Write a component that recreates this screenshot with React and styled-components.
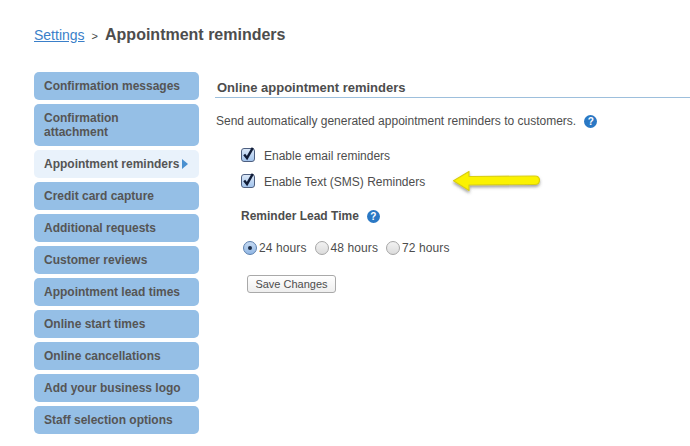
import styled, { createGlobalStyle } from "styled-components";

const GlobalStyle = createGlobalStyle`
  html, body {
    margin: 0;
    background: #fff;
    font-family: "Liberation Sans", Arial, sans-serif;
    color: #555;
  }
`;

const Page = styled.div`
  width: 690px;
  height: 446px;
  overflow: hidden;
  padding: 26px 0 0 34px;
  box-sizing: border-box;
`;

const Breadcrumb = styled.div`
  display: flex;
  align-items: baseline;
  height: 46px;
`;

const BackLink = styled.a`
  font-size: 14px;
  color: #3a7fc9;
  text-decoration: underline;
`;

const Separator = styled.span`
  font-size: 11px;
  margin: 0 7px;
  color: #444;
`;

const Title = styled.h1`
  margin: 0;
  font-size: 16px;
  font-weight: bold;
  color: #4d4d4d;
`;

const Layout = styled.div`
  display: flex;
`;

const Sidebar = styled.nav`
  width: 165px;
  display: flex;
  flex-direction: column;
  gap: 4px;
`;

const NavItem = styled.div`
  display: flex;
  align-items: center;
  box-sizing: border-box;
  min-height: 28px;
  padding: 7px 4px 7px 10px;
  border-radius: 5px;
  font-size: 12px;
  line-height: 14px;
  font-weight: bold;
  color: #555;
  background: ${(p) => (p.$active ? "#e9f2fb" : "#95bfe6")};
`;

const NavLabel = styled.span`
  max-width: 140px;
`;

const ActiveMarker = styled.span`
  width: 0;
  height: 0;
  margin-left: 3px;
  border-left: 6px solid #4a90d0;
  border-top: 5px solid transparent;
  border-bottom: 5px solid transparent;
`;

const Content = styled.main`
  position: relative;
  flex: 1;
  margin-left: 16px;
`;

const SectionTitle = styled.h2`
  margin: 0;
  padding: 9px 0 2px 2px;
  font-size: 13px;
  line-height: 14px;
  font-weight: bold;
  color: #4d4d4d;
  border-bottom: 1px solid #9dbfdc;
`;

const Intro = styled.p`
  display: flex;
  align-items: center;
  margin: 15px 0 0 1px;
  font-size: 12px;
  line-height: 16px;
  color: #4d4d4d;
`;

const HelpBadge = styled.span`
  display: inline-flex;
  align-items: center;
  justify-content: center;
  width: 13px;
  height: 13px;
  margin-left: ${(p) => p.$gap}px;
  border-radius: 50%;
  background: #2a78c4;
  color: #fff;
  font-size: 10px;
  line-height: 13px;
  font-weight: bold;
`;

const CheckList = styled.div`
  display: flex;
  flex-direction: column;
  gap: 10px;
  margin: 19px 0 0 26px;
`;

const CheckRow = styled.label`
  display: flex;
  align-items: center;
  height: 16px;
  font-size: 12px;
  color: #4d4d4d;
`;

const CheckBox = styled.span`
  display: flex;
  align-items: center;
  justify-content: center;
  box-sizing: border-box;
  width: 14px;
  height: 14px;
  margin: -3px 9px 0 0;
  border: 1px solid #4d5f80;
  border-radius: 3px;
  background: linear-gradient(#dbe8f8, #a3c4ec);
`;

const TickMark = styled.svg`
  overflow: visible;
`;

const LeadTime = styled.h3`
  display: flex;
  align-items: center;
  margin: 18px 0 0 26px;
  font-size: 12px;
  line-height: 16px;
  font-weight: bold;
  color: #4d4d4d;
`;

const RadioRow = styled.div`
  display: flex;
  align-items: center;
  margin: 17px 0 0 28px;
`;

const RadioLabel = styled.label`
  display: flex;
  align-items: center;
  gap: 2px;
  margin-right: 8px;
  font-size: 12px;
  letter-spacing: 0.1px;
  color: #4d4d4d;
`;

const RadioDot = styled.span`
  display: flex;
  align-items: center;
  justify-content: center;
  box-sizing: border-box;
  width: 14px;
  height: 14px;
  border-radius: 50%;
  border: 1px solid ${(p) => (p.$on ? "#5b7fae" : "#a6a6a6")};
  background: ${(p) =>
    p.$on ? "linear-gradient(#c6daf2, #91b7e4)" : "linear-gradient(#f2f2f2, #dcdcdc)"};
  &::after {
    content: "";
    display: ${(p) => (p.$on ? "block" : "none")};
    width: 4px;
    height: 4px;
    border-radius: 50%;
    background: #1d2b44;
  }
`;

const SaveButton = styled.button`
  display: block;
  box-sizing: border-box;
  width: 89px;
  height: 18px;
  margin: 20px 0 0 32px;
  padding: 0;
  border: 1px solid #a9a9a9;
  border-radius: 3px;
  background: linear-gradient(#fff, #eee);
  font-family: inherit;
  font-size: 11px;
  color: #4d4d4d;
`;

const ArrowMark = styled.svg`
  position: absolute;
  left: 236px;
  top: 98px;
`;

const navItems = [
  "Confirmation messages",
  "Confirmation attachment",
  "Appointment reminders",
  "Credit card capture",
  "Additional requests",
  "Customer reviews",
  "Appointment lead times",
  "Online start times",
  "Online cancellations",
  "Add your business logo",
  "Staff selection options",
];

const checks = ["Enable email reminders", "Enable Text (SMS) Reminders"];
const hours = ["24 hours", "48 hours", "72 hours"];

function Tick() {
  return (
    <TickMark width="12" height="12" viewBox="0 0 12 12">
      <path d="M2.2 5.5 L5 9 L10.8 -1.2" fill="none" stroke="#111d38" strokeWidth="2.4" />
    </TickMark>
  );
}

export default function App() {
  return (
    <>
      <GlobalStyle />
      <Page>
        <Breadcrumb>
          <BackLink>Settings</BackLink>
          <Separator>&gt;</Separator>
          <Title>Appointment reminders</Title>
        </Breadcrumb>
        <Layout>
          <Sidebar>
            {navItems.map((item) => (
              <NavItem key={item} $active={item === "Appointment reminders"}>
                <NavLabel>{item}</NavLabel>
                {item === "Appointment reminders" && <ActiveMarker />}
              </NavItem>
            ))}
          </Sidebar>
          <Content>
            <SectionTitle>Online appointment reminders</SectionTitle>
            <Intro>
              Send automatically generated appointment reminders to customers.
              <HelpBadge $gap={8}>?</HelpBadge>
            </Intro>
            <CheckList>
              {checks.map((label) => (
                <CheckRow key={label}>
                  <CheckBox>
                    <Tick />
                  </CheckBox>
                  {label}
                </CheckRow>
              ))}
            </CheckList>
            <ArrowMark width="94" height="26" viewBox="0 0 94 26">
              <defs>
                <filter id="arrowShadow" x="-10%" y="-30%" width="120%" height="170%">
                  <feDropShadow dx="0" dy="2" stdDeviation="1.5" floodColor="#555" floodOpacity="0.55" />
                </filter>
              </defs>
              <path
                d="M2.5 10.7 L18 1.5 L18 6.5 L84 6 Q88.5 6 88.5 10.3 Q88.5 14.5 84 14.5 L18 15 L18 20.5 Z"
                fill="#fbf200"
                stroke="#d9cf10"
                strokeWidth="1.2"
                strokeLinejoin="round"
                filter="url(#arrowShadow)"
              />
            </ArrowMark>
            <LeadTime>
              Reminder Lead Time
              <HelpBadge $gap={8}>?</HelpBadge>
            </LeadTime>
            <RadioRow>
              {hours.map((label, i) => (
                <RadioLabel key={label}>
                  <RadioDot $on={i === 0} />
                  {label}
                </RadioLabel>
              ))}
            </RadioRow>
            <SaveButton>Save Changes</SaveButton>
          </Content>
        </Layout>
      </Page>
    </>
  );
}
